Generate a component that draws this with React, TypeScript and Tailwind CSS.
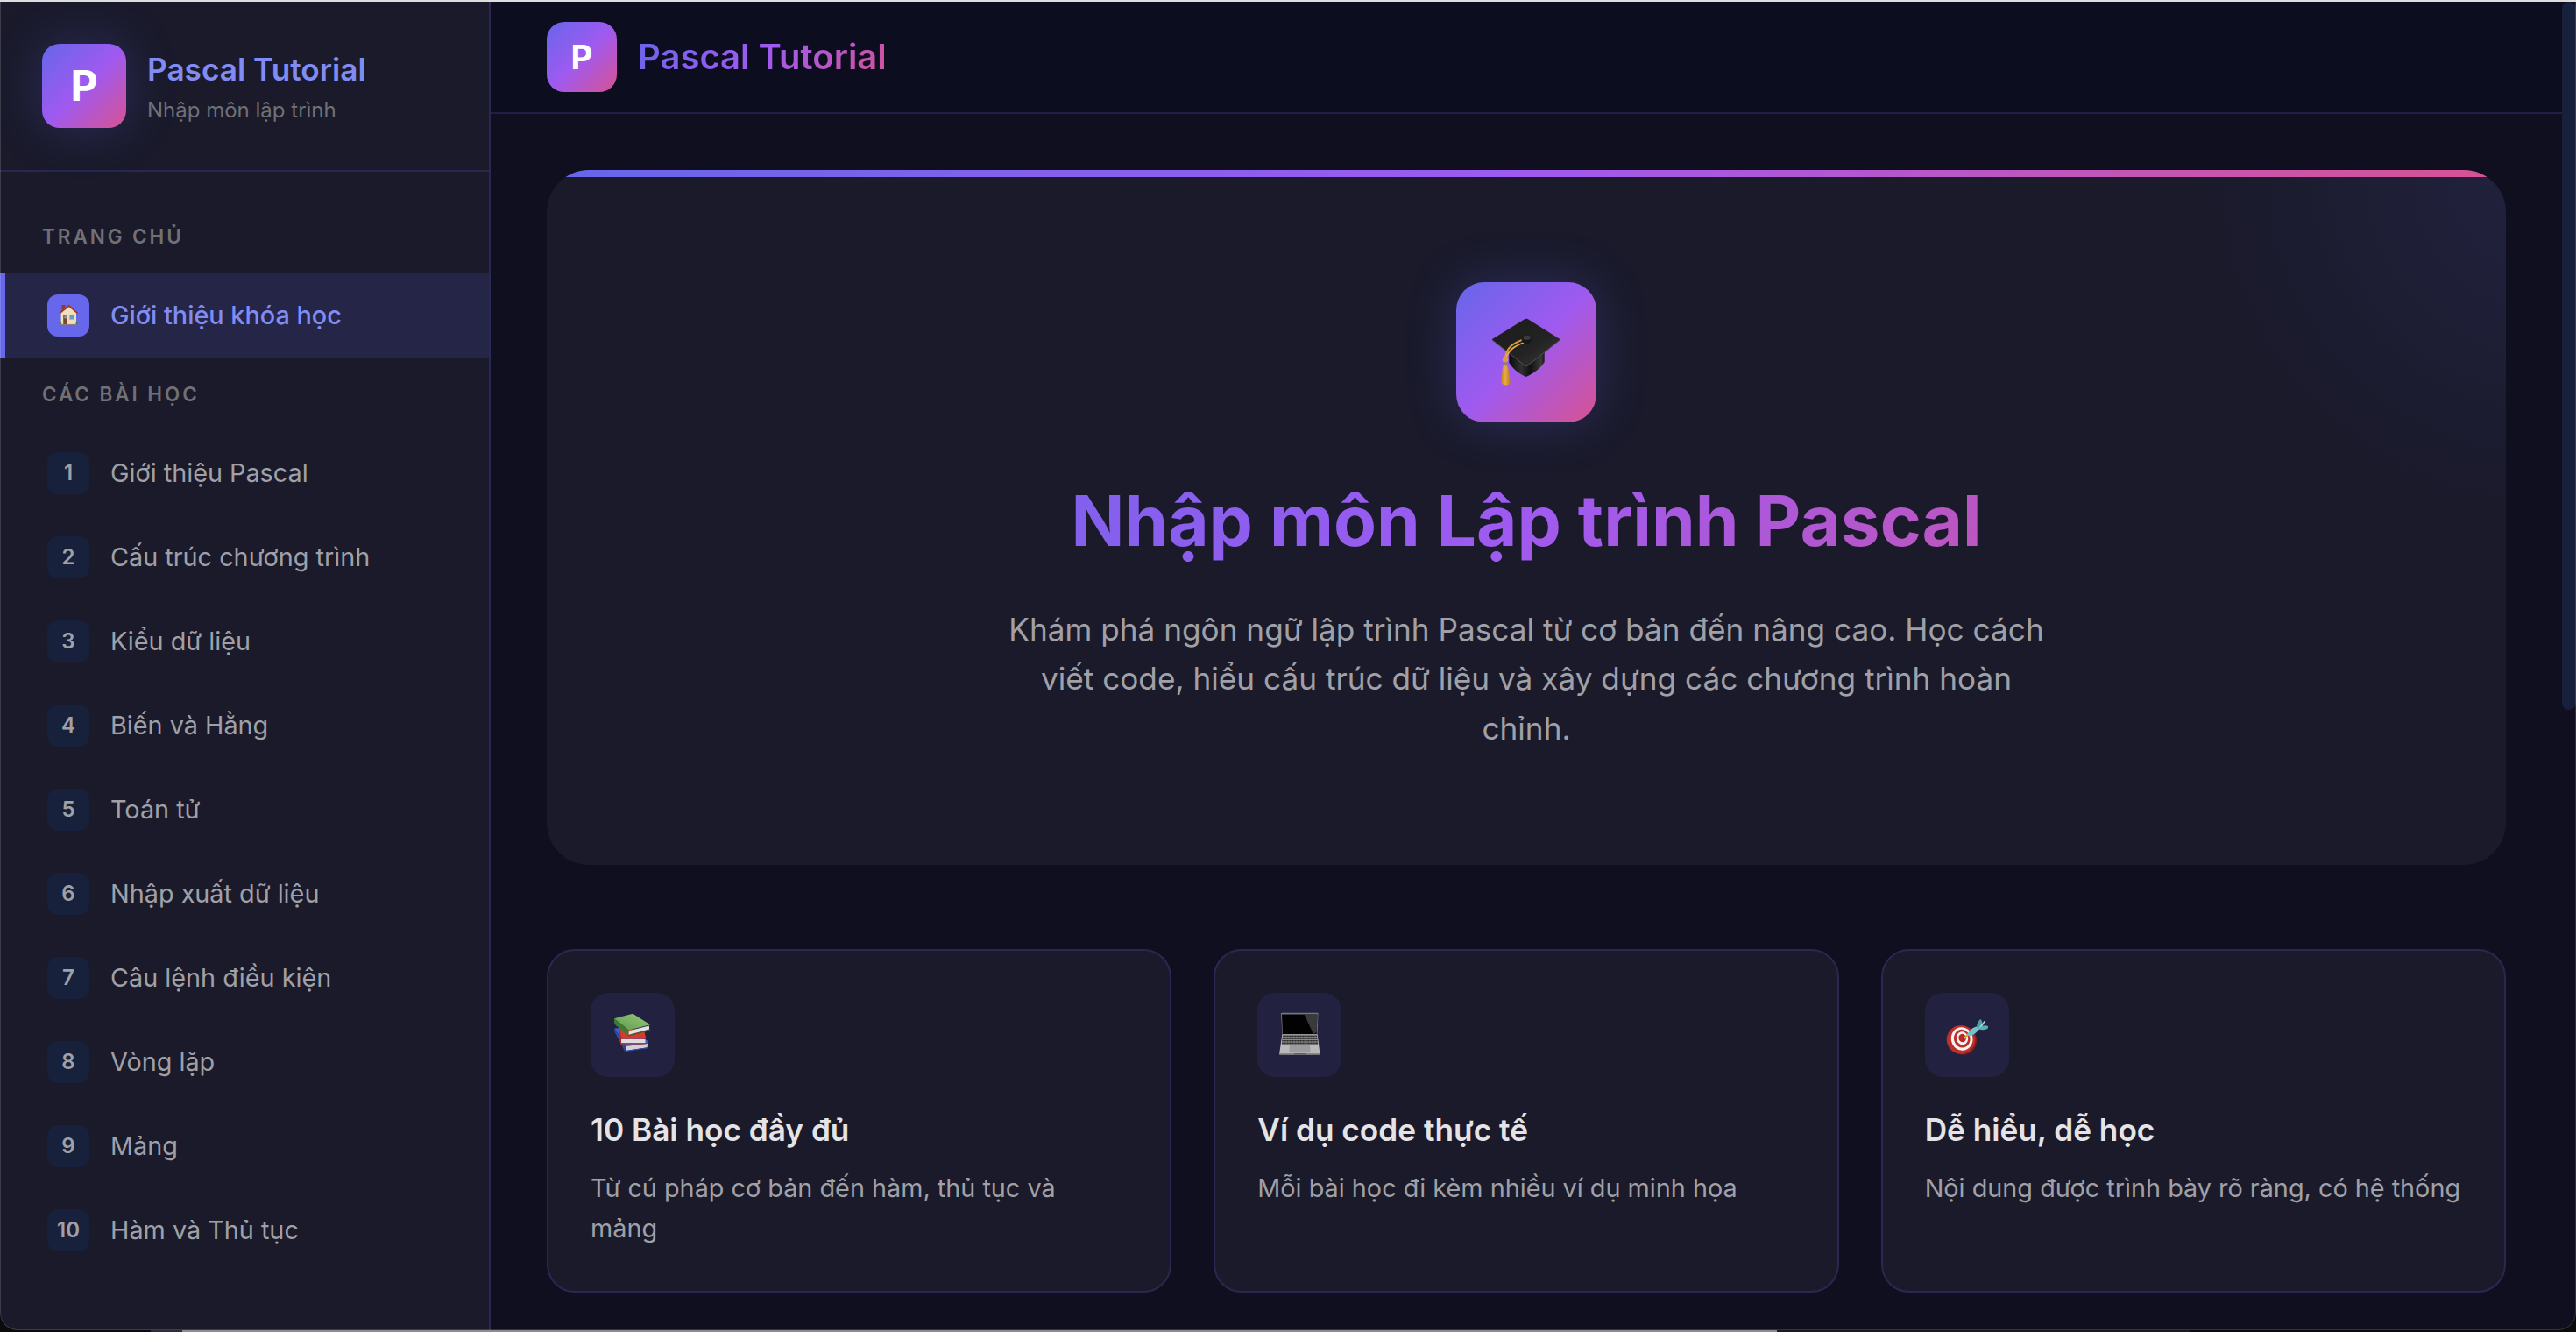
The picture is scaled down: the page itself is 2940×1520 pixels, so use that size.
import type { ComponentType } from "react";

interface Lesson {
  id: number;
  title: string;
}

interface Feature {
  title: string;
  description: string;
  icon: ComponentType;
}

const lessons: Lesson[] = [
  { id: 1, title: "Giới thiệu Pascal" },
  { id: 2, title: "Cấu trúc chương trình" },
  { id: 3, title: "Kiểu dữ liệu" },
  { id: 4, title: "Biến và Hằng" },
  { id: 5, title: "Toán tử" },
  { id: 6, title: "Nhập xuất dữ liệu" },
  { id: 7, title: "Câu lệnh điều kiện" },
  { id: 8, title: "Vòng lặp" },
  { id: 9, title: "Mảng" },
  { id: 10, title: "Hàm và Thủ tục" },
];

const features: Feature[] = [
  {
    title: "10 Bài học đầy đủ",
    description: "Từ cú pháp cơ bản đến hàm, thủ tục và mảng",
    icon: BooksIcon,
  },
  {
    title: "Ví dụ code thực tế",
    description: "Mỗi bài học đi kèm nhiều ví dụ minh họa",
    icon: LaptopIcon,
  },
  {
    title: "Dễ hiểu, dễ học",
    description: "Nội dung được trình bày rõ ràng, có hệ thống",
    icon: TargetIcon,
  },
];

/* ── Icons ─────────────────────────────────────────────── */

function HouseIcon() {
  return (
    <svg viewBox="0 0 48 48" className="size-full">
      <path d="M16.500 12h4v7h-4z" fill="#8f3a32" />
      <path d="M15.600 21 24.700 13.500 33 21v13.200H15.600z" fill="#efdfbd" />
      <path d="M13.800 20.600 24.700 11.600 35 20.800l-.4 1.600-9.900-8.200-10.400 8z" fill="#9f3a32" />
      <path d="M18.200 23.200h4.800v11h-4.800z" fill="#7a4630" />
      <path d="M19.400 24.400h2.400v3h-2.400z" fill="#86a3b5" />
      <path d="M25.300 23.400h5.200v5.200h-5.200z" fill="#6b9cc4" stroke="#b9b49f" strokeWidth=".7" />
      <path d="M15 33.900h18.600v.8H15z" fill="#8d7d66" />
      <circle cx="14.800" cy="32.800" r="1.500" fill="#4d8a35" />
      <circle cx="33.800" cy="32.800" r="1.500" fill="#4d8a35" />
    </svg>
  );
}

function GraduationIcon() {
  return (
    <svg viewBox="0 0 160 160" className="size-full">
      <defs>
        <linearGradient id="board" x1="0" y1="0" x2="1" y2="1">
          <stop offset="0" stopColor="#1b1b1b" />
          <stop offset=".6" stopColor="#232323" />
          <stop offset="1" stopColor="#3c3c3c" />
        </linearGradient>
        <linearGradient id="cap">
          <stop offset="0" stopColor="#0a0a0a" />
          <stop offset=".35" stopColor="#303030" />
          <stop offset=".6" stopColor="#111111" />
          <stop offset=".9" stopColor="#3a3a3a" />
          <stop offset="1" stopColor="#1a1a1a" />
        </linearGradient>
        <linearGradient id="tassel">
          <stop offset="0" stopColor="#c98a24" />
          <stop offset=".45" stopColor="#e9ab45" />
          <stop offset="1" stopColor="#b87a1e" />
        </linearGradient>
      </defs>
      <path d="M60.300 80v11.500C64 99 73 105 79.500 108 87 105 97 98 100.700 91V80z" fill="url(#cap)" />
      <path d="M80 41.700q.8-.2 1.600.3L118 64.800q.8.8 0 1.600L81.500 95.400q-1.500 1-3 0L41.500 66.500q-.9-1 0-1.700L78.400 42q.8-.5 1.600-.3z" fill="url(#board)" />
      <path d="M41.200 66 78.500 95.200q1.500 1 3 0L118.200 66" fill="none" stroke="#555555" strokeWidth=".9" />
      <path d="M75.500 65.600C65 70 57.500 74 55.900 86" fill="none" stroke="#d99a35" strokeWidth="2" />
      <path d="M78 68.500C67 73 60.500 76 57 86" fill="none" stroke="#e9ab45" strokeWidth="1.800" />
      <ellipse cx="80" cy="65" rx="5.600" ry="5.200" fill="#161616" />
      <ellipse cx="80.500" cy="63.200" rx="4.200" ry="2.600" fill="#3b3b3b" />
      <circle cx="56" cy="88.300" r="3.200" fill="#dd9c37" />
      <path d="M53.800 91.500h4.200v3.800h-4.200z" fill="#8d8468" />
      <path d="M53.500 95.300h4.800c2 5 3.200 14 3.300 20.500q-4.900 3.400-9.900 0c0-7 .5-15 1.800-20.500z" fill="url(#tassel)" />
    </svg>
  );
}

function BooksIcon() {
  return (
    <svg viewBox="0 0 96 96" className="size-full">
      <defs>
        <linearGradient id="green" x1="0" y1="1" x2="1" y2="0">
          <stop offset="0" stopColor="#5c9a49" />
          <stop offset="1" stopColor="#9bca7f" />
        </linearGradient>
      </defs>
      <path d="M27.300 40.500 34 40l32 15v2l-26 4.500z" fill="#3c5fd0" />
      <path d="M27.300 40.500 40.300 61l-1 6.200L28 45.500q-1.300-2.500-.7-5z" fill="#2b4a9c" />
      <path d="M40.300 61 65 57.800l-.3 4.500L40 65.900z" fill="#d2d3d8" />
      <path d="M39.300 67.200 66 63.200v-1L40 66z" fill="#2f4fb5" />
      <path d="M32.700 38.500 61.500 44.500l2 8-28.500.2z" fill="#d63a2b" />
      <path d="M32.700 38.500 35.200 52.500v5.800L34 58z" fill="#a52a20" />
      <path d="M35 53h27.500v4.200H35z" fill="#dedede" />
      <path d="M34 57.200h29.500v1.300H34z" fill="#c23226" />
      <path d="M27 29.200 48.300 23.700 68 36.300 43.700 42.600z" fill="url(#green)" />
      <path d="M27 29.200 43.700 42.600 43 49.200 27.500 35.700q-1-3.300-.5-6.500z" fill="#3f7a31" />
      <path d="M43.800 43.200 66.800 37.600l.4 4-23.600 6.200z" fill="#e2e2e2" />
      <path d="M43 48.200 68 41.800v1.200l-25 6.400z" fill="#2f6325" />
    </svg>
  );
}

function LaptopIcon() {
  return (
    <svg viewBox="0 0 96 96" className="size-full">
      <path d="M27 23.500q0-.8 1-.8h40.500q1 0 1 .8L68.500 48h-40z" fill="#77777b" />
      <path d="M28 24.600h40.500L67.700 47H29z" fill="#020202" />
      <path d="M53.500 24.600h15L67.700 45 64 47z" fill="#3a3a3c" />
      <path d="M28.300 47.500h40.400L71.400 69v1.500H25.200V69z" fill="#b9b9bb" />
      <path d="M29 48.600h39l1.200 10H27.800z" fill="#2a2a2b" />
      <path d="M28.600 50.800h40M28.400 53.400h40.600M28 56h41.400" stroke="#a5a5a7" strokeWidth=".9" />
      <path d="M30 48.600v10M33 48.600v10M36 48.600v10M39 48.600v10M42 48.600v10M45 48.600v10M48 48.600v10M51 48.600v10M54 48.600v10M57 48.600v10M60 48.600v10M63 48.600v10M66 48.600v10" stroke="#8a8a8c" strokeWidth=".6" />
      <path d="M37 59.700h23l.6 8.600H36.400z" fill="#9c9c9e" />
      <path d="M25.200 69.300h46.200v1.400H25.200z" fill="#77777a" />
      <path d="M42 69.300h13v.9H42z" fill="#4c4c4f" />
    </svg>
  );
}

function TargetIcon() {
  return (
    <svg viewBox="0 0 96 96" className="size-full">
      <g transform="rotate(-14 42 54)">
        <ellipse cx="43" cy="54.500" rx="16" ry="16.500" fill="#7c1f1b" />
        <ellipse cx="41.200" cy="53.200" rx="16.300" ry="16.300" fill="#bd2f2a" />
        <ellipse cx="42.500" cy="52.600" rx="12.300" ry="13.300" fill="#f6f3f2" />
        <ellipse cx="42.700" cy="52.300" rx="9.300" ry="10.400" fill="#bd2f2a" />
        <ellipse cx="43" cy="52" rx="6.700" ry="7.500" fill="#f6f3f2" />
        <ellipse cx="43.200" cy="51.800" rx="4.200" ry="4.800" fill="#b92a26" />
      </g>
      <path d="M44.500 52 50 46.500" stroke="#d9a62e" strokeWidth="2" />
      <path d="M48.500 47.500C50 42.500 55 39.500 59.500 38.300l3 2.300C60 45 54.500 49 50 49.500z" fill="#6cc6cc" />
      <path d="M59 39.500C59 35 61 31.500 63.500 30q2.500 2.500 1.500 5.500L61.500 41z" fill="#4f9fa8" />
      <path d="M61 40.500 67.500 32l1.300.6-5 7.900z" fill="#a9dde0" />
      <path d="M61 41.200C65 37 69 36.800 72 38q.5 2.500-2 3.500-4.500 1.500-9-.3z" fill="#5bb0b8" />
    </svg>
  );
}

/* ── Sidebar ───────────────────────────────────────────── */

function SectionLabel({ children }: { children: string }) {
  return (
    <p className="px-12 py-6 text-[22.4px] leading-[36px] font-semibold tracking-[3px] uppercase text-[#707075]">
      {children}
    </p>
  );
}

function Sidebar() {
  return (
    <aside className="flex flex-col w-[560px] shrink-0 bg-[#1a1a2b] border-r-2 border-[#292850] overflow-hidden">
      <div className="flex items-center gap-6 h-[194px] px-12 shrink-0 border-b-2 border-[#292850]">
        <div className="flex items-center justify-center size-24 rounded-[20px] bg-[linear-gradient(135deg,#6666ea_0%,#9f5af0_50%,#d85291_100%)] shadow-[0_0_56px_rgba(99,102,241,0.25)] shrink-0">
          <span className="text-white font-bold text-[48px] leading-none">P</span>
        </div>
        <div className="flex flex-col">
          <span className="text-[#818cf3] font-semibold text-[35.2px] leading-[56px]">Pascal Tutorial</span>
          <span className="text-[#707075] text-[24px] leading-[38px]">Nhập môn lập trình</span>
        </div>
      </div>

      <nav className="flex flex-col pt-8">
        <SectionLabel>Trang chủ</SectionLabel>
        <a href="#" className="flex items-center gap-6 h-24 pl-12 border-l-[6px] border-[#6667ea] bg-[#252548]">
          <span className="size-12 rounded-xl bg-[#6667ea] shrink-0">
            <HouseIcon />
          </span>
          <span className="text-[#818cf3] font-medium text-[28.8px] whitespace-nowrap">Giới thiệu khóa học</span>
        </a>

        <SectionLabel>Các bài học</SectionLabel>
        <ul className="flex flex-col">
          {lessons.map((lesson) => (
            <li key={lesson.id}>
              <a href="#" className="flex items-center gap-6 h-24 pl-12 border-l-[6px] border-transparent">
                <span className="flex items-center justify-center size-12 rounded-xl bg-[#17213b] text-[#a0a0a7] text-[24px] font-semibold shrink-0">
                  {lesson.id}
                </span>
                <span className="text-[#a0a0a7] text-[28.8px] whitespace-nowrap">{lesson.title}</span>
              </a>
            </li>
          ))}
        </ul>
      </nav>
    </aside>
  );
}

/* ── Main ──────────────────────────────────────────────── */

function TopBar() {
  return (
    <header className="flex items-center gap-6 h-32 px-16 shrink-0 bg-[#0d0d20] border-b-2 border-[#1f1f47]">
      <div className="flex items-center justify-center size-20 rounded-[20px] bg-[linear-gradient(135deg,#6666ea_0%,#9f5af0_50%,#d85291_100%)] shrink-0">
        <span className="text-white font-bold text-[38.4px] leading-none">P</span>
      </div>
      <span className="bg-[linear-gradient(135deg,#6666ea_0%,#9f5af0_50%,#d85291_100%)] bg-clip-text text-transparent font-semibold text-[40px] leading-[64px]">
        Pascal Tutorial
      </span>
    </header>
  );
}

function Hero() {
  return (
    <section className="relative overflow-hidden rounded-[48px] bg-[#1a1a2b] p-32 flex flex-col items-center">
      {/* Corner glow and top accent */}
      <div className="absolute -top-[396px] -right-[447px] size-[800px] bg-[radial-gradient(circle,rgba(99,102,241,0.1)_0%,transparent_70%)]" />
      <div className="absolute top-0 inset-x-0 h-2 bg-[linear-gradient(135deg,#6666ea_0%,#9f5af0_50%,#d85291_100%)]" />

      <div className="relative size-40 rounded-[32px] bg-[linear-gradient(135deg,#6666ea_0%,#9f5af0_50%,#d85291_100%)] shadow-[0_0_56px_rgba(99,102,241,0.25)] shrink-0">
        <GraduationIcon />
      </div>
      <h1 className="relative mt-12 w-full text-center bg-[linear-gradient(135deg,#6666ea_0%,#9f5af0_50%,#d85291_100%)] bg-clip-text text-transparent font-bold text-[80px] leading-[128px]">
        Nhập môn Lập trình Pascal
      </h1>
      <p className="relative mt-8 w-[1200px] text-center text-[#a0a0a7] text-[35.2px] leading-[56.32px]">
        Khám phá ngôn ngữ lập trình Pascal từ cơ bản đến nâng cao. Học cách viết code, hiểu cấu trúc dữ liệu và xây dựng các chương trình hoàn chỉnh.
      </p>
    </section>
  );
}

function FeatureCard({ feature }: { feature: Feature }) {
  const Icon = feature.icon;

  return (
    <article className="rounded-[32px] border-2 border-[#292850] bg-[#1a1a2b] p-12">
      <div className="size-24 rounded-[20px] bg-[#222140]">
        <Icon />
      </div>
      <h3 className="mt-8 text-[#e4e4e7] font-semibold text-[35.2px] leading-[56.32px]">{feature.title}</h3>
      <p className="mt-4 text-[#a0a0a7] text-[28.8px] leading-[46.08px]">{feature.description}</p>
    </article>
  );
}

export default function App() {
  return (
    <div className="flex flex-col w-full h-[1520px] overflow-hidden bg-[#0b0b0b] font-[Inter,'Noto_Sans',sans-serif] antialiased">
      <div className="h-0.5 shrink-0 bg-[#dedede]" />

      <div className="relative flex flex-1 min-h-0 overflow-hidden rounded-b-[20px] bg-[#100f1f]">
        <Sidebar />
        <main className="flex flex-col flex-1 min-w-0 overflow-hidden">
          <TopBar />
          <div className="flex flex-col gap-24 px-16 pt-16">
            <Hero />
            <div className="grid grid-cols-3 gap-12">
              {features.map((feature) => (
                <FeatureCard key={feature.title} feature={feature} />
              ))}
            </div>
          </div>
        </main>

        {/* Scrollbar */}
        <div className="w-4 shrink-0">
          <div className="h-[808px] rounded-full bg-[#17213b]" />
        </div>

        <div className="absolute inset-0 rounded-b-[20px] border border-t-0 border-white/15 pointer-events-none" />
      </div>

      {/* Strip below the window */}
      <div className="flex h-0.5 shrink-0 pl-[172px]">
        <div className="w-9 bg-[#2c3036]" />
        <div className="w-[1820px] bg-[#8c8c8c]" />
        <div className="w-[472px] bg-[#1d1a1d]" />
      </div>
    </div>
  );
}
